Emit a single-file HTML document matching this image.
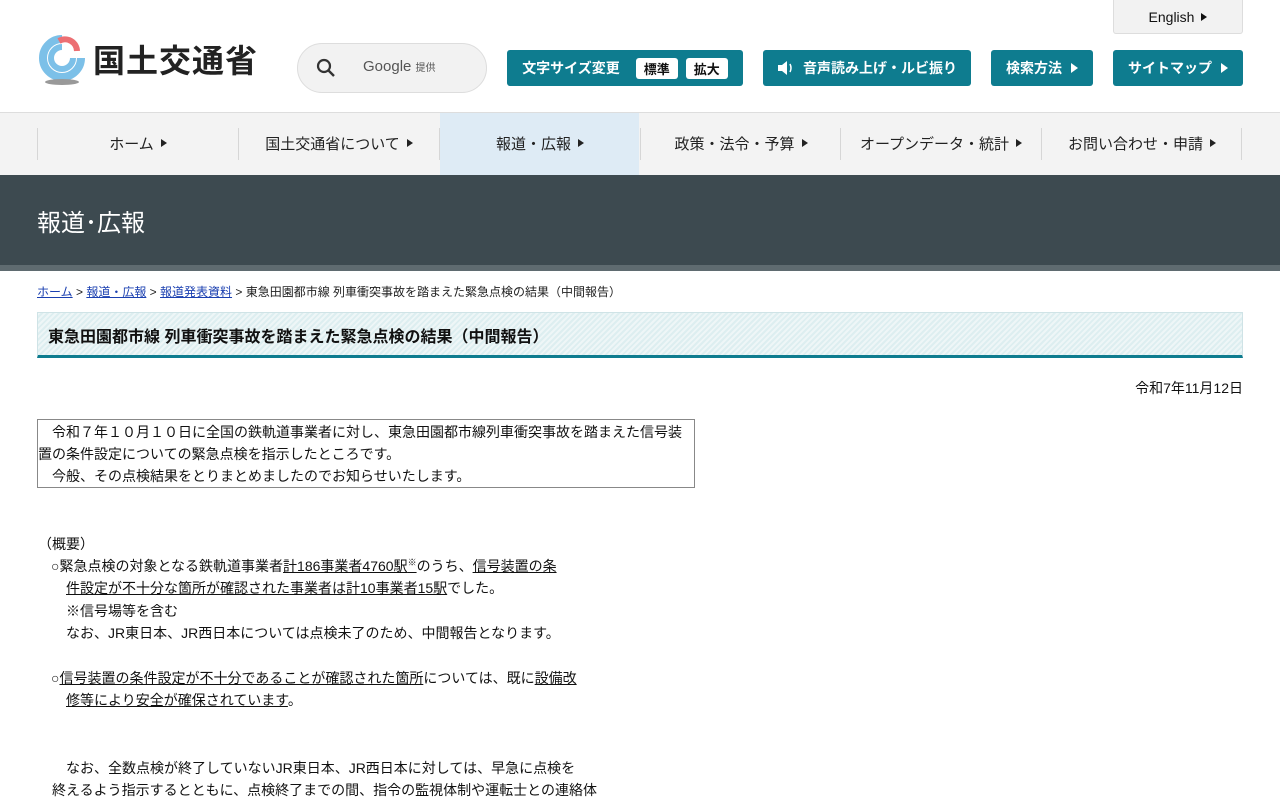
<!DOCTYPE html>
<html><head><meta charset="utf-8"><style>
*{margin:0;padding:0;box-sizing:border-box}
body{width:1280px;height:800px;overflow:hidden;background:#fff;font-family:"Liberation Sans","Noto Sans CJK JP",sans-serif;color:#111}
.abs{position:absolute}
.btn{position:absolute;top:50px;height:36px;background:#0e7c8f;color:#fff;border-radius:3px;font-size:14px;font-weight:bold;display:flex;align-items:center;justify-content:center}
.tri{display:inline-block;width:0;height:0;border-left:7px solid currentColor;border-top:5px solid transparent;border-bottom:5px solid transparent;margin-left:9px}
.tri.s{border-left-width:6px;border-top-width:4px;border-bottom-width:4px;margin-left:7px}
.chip{background:#fff;color:#111;border-radius:3px;padding:1px 8px;margin-left:8px;font-size:13px}
#nav{position:absolute;top:112px;left:0;width:1280px;height:63px;background:#f3f3f3;border-top:1px solid #ddd}
.ni{position:absolute;top:0;height:62px;display:flex;align-items:center;justify-content:center;font-size:15px;color:#222}
.sep{position:absolute;top:15px;width:1px;height:32px;background:#d6d6d6}
a{color:#1a3fb0}
.ln{position:absolute;font-size:14px;line-height:22px;white-space:nowrap}
</style></head><body>
<svg class="abs" style="left:37px;top:33px" width="50" height="54" viewBox="0 0 50 54">
<path d="M25 6a19 19 0 1 0 19 19" fill="none" stroke="#7cc0e8" stroke-width="8"/>
<path d="M25 14a11 11 0 1 0 11 11" fill="none" stroke="#7cc0e8" stroke-width="6"/>
<path d="M22 8a12 12 0 0 1 18 10" fill="none" stroke="#ec6f73" stroke-width="6"/>
<ellipse cx="25" cy="49" rx="17" ry="3" fill="#999"/>
</svg>
<div class="abs" style="left:93px;top:36px;font-size:32px;font-weight:bold;letter-spacing:1px;color:#222">国土交通省</div>
<div class="abs" style="left:297px;top:43px;width:190px;height:50px;border:1px solid #ddd;border-radius:25px;background:#f2f2f2"></div>
<svg class="abs" style="left:316px;top:58px" width="20" height="20" viewBox="0 0 20 20"><circle cx="8" cy="8" r="6" fill="none" stroke="#333" stroke-width="2.2"/><path d="M12.5 12.5L18 18" stroke="#333" stroke-width="2.4"/></svg>
<div class="abs" style="left:363px;top:58px;font-size:15px;color:#555">Google <span style="font-size:10px">提供</span></div>
<div class="abs" style="left:1113px;top:0;width:130px;height:34px;background:#f2f2f2;border:1px solid #ddd;border-top:none;border-radius:0 0 3px 3px;display:flex;align-items:center;justify-content:center;font-size:14px">English<span class="tri s"></span></div>
<div class="btn" style="left:507px;width:236px">文字サイズ変更<span class="chip" style="margin-left:16px">標準</span><span class="chip">拡大</span></div>
<div class="btn" style="left:763px;width:208px"><svg width="18" height="16" viewBox="0 0 18 16" style="margin-right:8px"><path d="M1 5h4l5-4v14l-5-4H1z" fill="#fff"/><path d="M13 4q2 4 0 8" stroke="#fff" fill="none" stroke-width="1.5"/></svg>音声読み上げ・ルビ振り</div>
<div class="btn" style="left:991px;width:102px">検索方法<span class="tri"></span></div>
<div class="btn" style="left:1113px;width:130px">サイトマップ<span class="tri"></span></div>
<div id="nav">
<div class="ni" style="left:440px;width:199px;background:#deebf5"></div>
<div class="sep" style="left:37px"></div><div class="sep" style="left:238px"></div><div class="sep" style="left:439px"></div><div class="sep" style="left:640px"></div><div class="sep" style="left:840px"></div><div class="sep" style="left:1041px"></div><div class="sep" style="left:1241px"></div>
<div class="ni" style="left:38px;width:200px;top:-1px">ホーム<span class="tri s"></span></div>
<div class="ni" style="left:239px;width:200px;top:-1px">国土交通省について<span class="tri s"></span></div>
<div class="ni" style="left:440px;width:200px;top:-1px">報道・広報<span class="tri s"></span></div>
<div class="ni" style="left:641px;width:200px;top:-1px">政策・法令・予算<span class="tri s"></span></div>
<div class="ni" style="left:841px;width:200px;top:-1px">オープンデータ・統計<span class="tri s"></span></div>
<div class="ni" style="left:1042px;width:200px;top:-1px">お問い合わせ・申請<span class="tri s"></span></div>
</div>
<div class="abs" style="left:0;top:175px;width:1280px;height:90px;background:#3d4a50"></div>
<div class="abs" style="left:0;top:265px;width:1280px;height:6px;background:#5f6b70"></div>
<div class="abs" style="left:37px;top:203px;font-size:24px;color:#fff">報道･広報</div>
<div class="abs" style="left:37px;top:283px;font-size:12px;color:#222"><a href="#">ホーム</a> &gt; <a href="#">報道・広報</a> &gt; <a href="#">報道発表資料</a> &gt; 東急田園都市線 列車衝突事故を踏まえた緊急点検の結果（中間報告）</div>
<div class="abs" style="left:37px;top:312px;width:1206px;height:46px;border:1px solid #cfe3e6;border-bottom:3px solid #0e7c8f;background:repeating-linear-gradient(135deg,#eef6f7 0 2px,#ddeef0 2px 4px);font-size:16px;font-weight:bold;padding:10px 0 0 10px">東急田園都市線 列車衝突事故を踏まえた緊急点検の結果（中間報告）</div>
<div class="abs" style="right:37px;top:378px;font-size:14px">令和7年11月12日</div>
<div class="abs" style="left:37px;top:419px;width:658px;height:69px;border:1px solid #888;font-size:14px;line-height:22px;padding-top:1px">　令和７年１０月１０日に全国の鉄軌道事業者に対し、東急田園都市線列車衝突事故を踏まえた信号装置の条件設定についての緊急点検を指示したところです。<br>　今般、その点検結果をとりまとめましたのでお知らせいたします。</div>
<div class="ln" style="left:38px;top:533px">（概要）</div>
<div class="ln" style="left:51px;top:555px">○緊急点検の対象となる鉄軌道事業者<u>計186事業者4760駅<sup style="font-size:9px;line-height:0">※</sup></u>のうち、<u>信号装置の条</u></div>
<div class="ln" style="left:66px;top:577px"><u>件設定が不十分な箇所が確認された事業者は計10事業者15駅</u>でした。</div>
<div class="ln" style="left:66px;top:600px">※信号場等を含む</div>
<div class="ln" style="left:66px;top:622px">なお、JR東日本、JR西日本については点検未了のため、中間報告となります。</div>
<div class="ln" style="left:51px;top:667px">○<u>信号装置の条件設定が不十分であることが確認された箇所</u>については、既に<u>設備改</u></div>
<div class="ln" style="left:66px;top:689px"><u>修等により安全が確保されています</u>。</div>
<div class="ln" style="left:66px;top:757px">なお、全数点検が終了していないJR東日本、JR西日本に対しては、早急に点検を</div>
<div class="ln" style="left:52px;top:779px">終えるよう指示するとともに、点検終了までの間、指令の監視体制や運転士との連絡体</div>
</body></html>
